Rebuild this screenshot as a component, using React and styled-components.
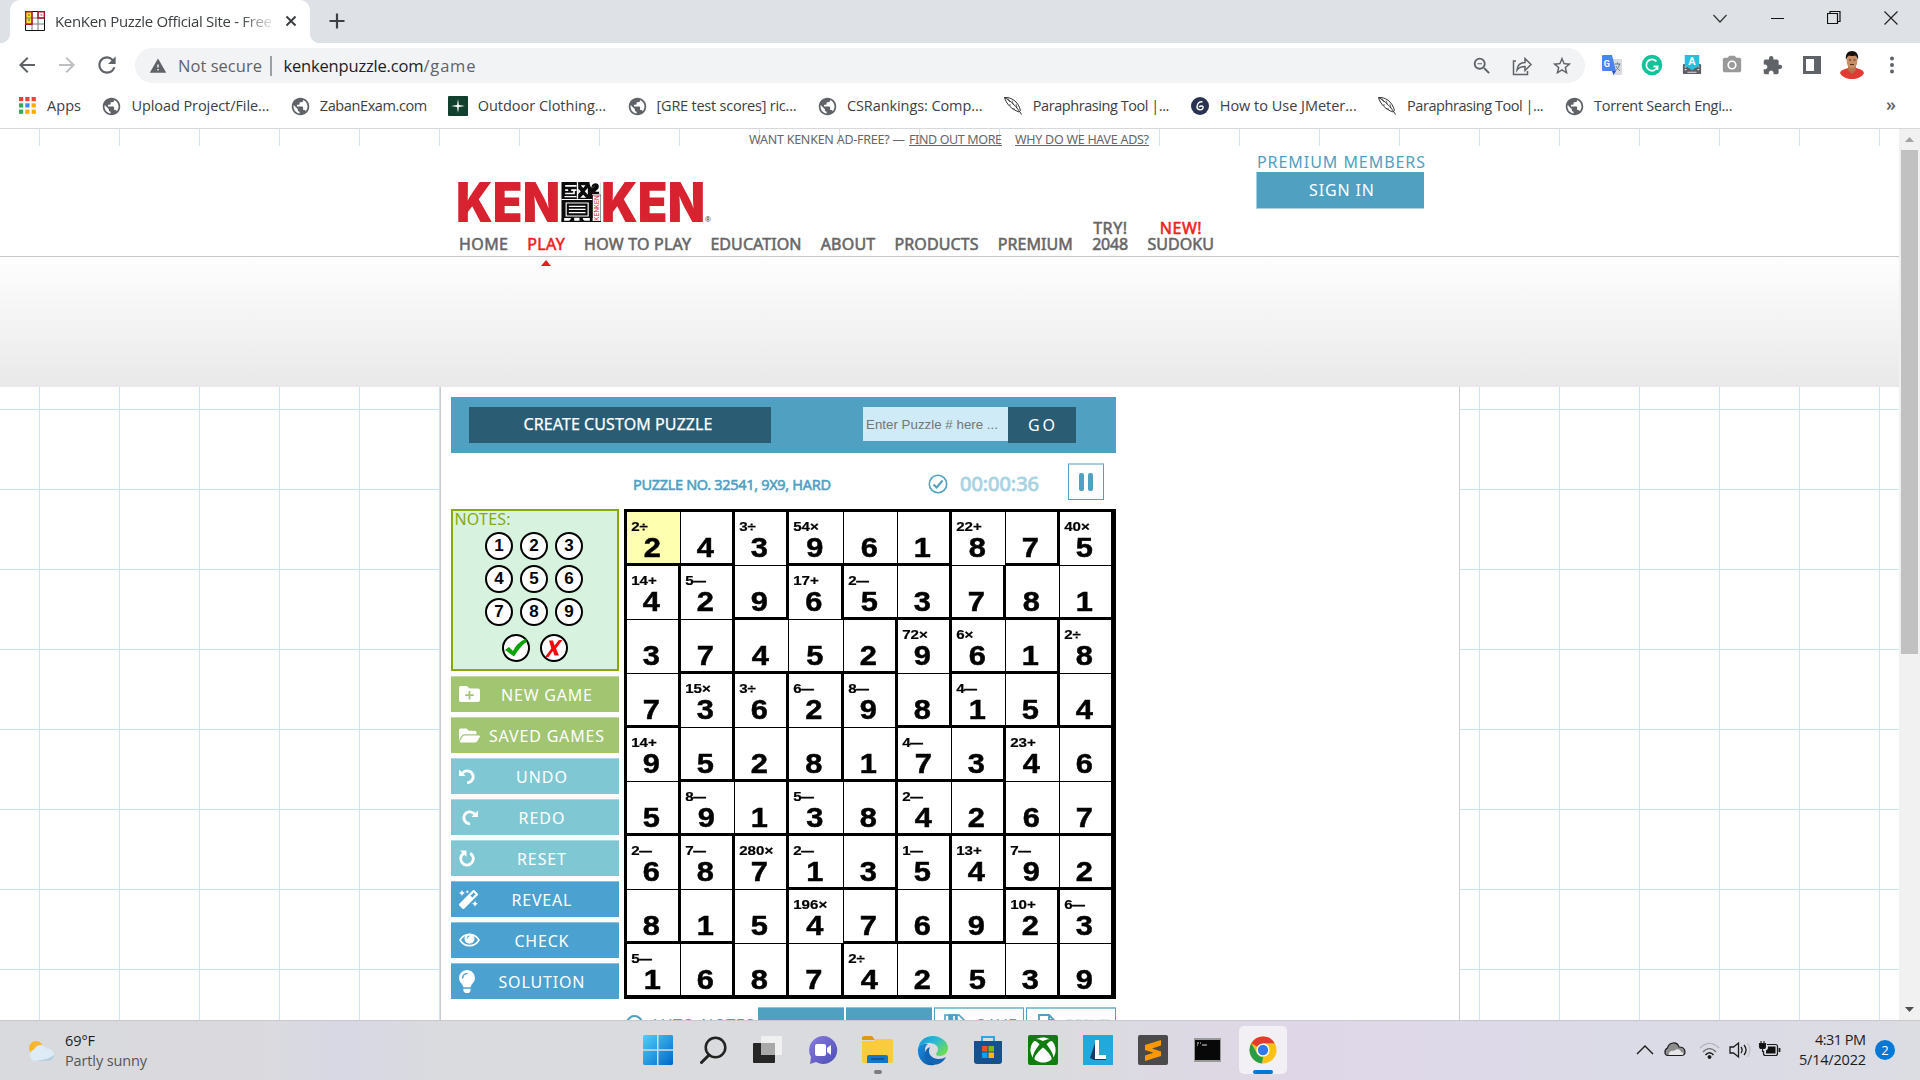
import React, { useLayoutEffect, useRef, useState } from "react";
import styled, { createGlobalStyle, css } from "styled-components";
import {
  MdPublic, MdZoomOut, MdStarBorder, MdWarning, MdRefresh, MdExtension, MdPhotoCamera, MdArrowBack, MdArrowForward,
} from "react-icons/md";
import { FaFolderOpen, FaMagic, FaLightbulb, FaXbox } from "react-icons/fa";

const Global = createGlobalStyle`
  * { box-sizing: border-box; }
  html, body { margin: 0; padding: 0; overflow: hidden; background: #fff; }
  svg { display: block; flex: none; }
`;

const UI = `"Open Sans", "Noto Sans", sans-serif`;
const SITE = `"Noto Sans", "Open Sans", sans-serif`;
const BLUE = "#4fa0c1";

/* Tracks a label out (or in) so that it fills the given width. */
const FitSpan = styled.span`
  display: inline-block;
  white-space: pre;
`;
function Fit({ w, children }) {
  const ref = useRef(null);
  const [ls, setLs] = useState(0);
  useLayoutEffect(() => {
    const natural = ref.current.getBoundingClientRect().width;
    setLs((w - natural) / (String(children).length - 1));
  }, []);
  return (
    <FitSpan ref={ref} style={{ letterSpacing: ls, marginRight: -ls }}>
      {children}
    </FitSpan>
  );
}

const Screen = styled.div`
  width: 1920px;
  height: 1080px;
  display: flex;
  flex-direction: column;
  overflow: hidden;
  font-family: ${UI};
`;

/* ---------- browser chrome ---------- */
const TabStrip = styled.div`
  height: 43px;
  flex: none;
  display: flex;
  background: #dee1e6;
  padding-left: 10px;
`;
const Tab = styled.div`
  position: relative;
  width: 300px;
  height: 43px;
  background: #fff;
  border-radius: 10px 10px 0 0;
  display: flex;
  align-items: center;
  padding: 0 13px 1px 15px;
  font-size: 15px;
  color: #3c4043;
  &::before, &::after {
    content: "";
    position: absolute;
    bottom: 0;
    width: 10px;
    height: 10px;
  }
  &::before { left: -10px; background: radial-gradient(circle at 0 0, transparent 10px, #fff 10.5px); }
  &::after { right: -10px; background: radial-gradient(circle at 100% 0, transparent 10px, #fff 10.5px); }
`;
const TabTitle = styled.div`
  width: 218px;
  margin: 0 12px 0 10px;
  overflow: hidden;
  white-space: nowrap;
  mask-image: linear-gradient(90deg, #000 185px, transparent 222px);
`;
const NewTab = styled.div`
  margin: 13px 0 0 19px;
`;
const WindowControls = styled.div`
  margin-left: auto;
  display: flex;
  height: 36px;
`;
const WindowButton = styled.div`
  width: 57.2px;
  display: grid;
  place-items: center;
`;
const Toolbar = styled.div`
  height: 44px;
  flex: none;
  display: flex;
  align-items: center;
  background: #fff;
  padding-left: 7px;
  color: #5f6368;
`;
const ToolCell = styled.div`
  width: 40px;
  height: 40px;
  flex: none;
  display: grid;
  place-items: center;
  color: ${(p) => p.$color || "#5f6368"};
`;
const Address = styled.div`
  width: 1450px;
  height: 35px;
  margin: 1px 7px 0 8px;
  border-radius: 18px;
  background: #f1f3f4;
  display: flex;
  align-items: center;
  padding: 0 3px 0 14px;
  font-size: 16.5px;
  color: #5f6368;
`;
const NotSecure = styled.div`
  margin-left: 11px;
`;
const Divider = styled.div`
  width: 1.5px;
  height: 20px;
  background: #9aa0a6;
  margin: 0 12px 0 8px;
`;
const Host = styled.span`color: #202124;`;
const AddressIcons = styled.div`
  margin-left: auto;
  display: flex;
`;
const Bookmarks = styled.div`
  height: 42px;
  flex: none;
  border-bottom: 1px solid #d6d8da;
  background: #fff;
  display: flex;
  align-items: center;
  gap: 20.4px;
  padding: 0 24px 4px 17px;
  font-size: 14.5px;
  color: #3c4043;
`;
const Bookmark = styled.div`
  display: flex;
  align-items: center;
  gap: 10px;
  white-space: nowrap;
`;
const BookmarkIcon = styled.div`
  width: 20px;
  height: 20px;
  display: grid;
  place-items: center;
  color: #5f6368;
`;
const MoreMarks = styled.div`
  margin-left: auto;
  font-size: 18px;
  font-weight: 600;
  line-height: 18px;
  padding-bottom: 3px;
  color: #5f6368;
`;

/* ---------- web page ---------- */
const View = styled.div`
  flex: 1;
  min-height: 0;
  display: flex;
  overflow: hidden;
`;
const Page = styled.div`
  width: 1899px;
  display: flex;
  flex-direction: column;
  font-family: ${SITE};
  background:
    linear-gradient(90deg, #c9e7f0 1px, transparent 1px) 39px 0 / 80px 80px,
    linear-gradient(180deg, #c9e7f0 1px, transparent 1px) 0 40px / 80px 80px,
    #fff;
`;
const AdFree = styled.div`
  height: 17px;
  flex: none;
  display: flex;
  padding-left: 749px;
  font-size: 12.5px;
  line-height: 21px;
  color: #666;
`;
const AdLink = styled.span`
  margin-left: ${(p) => p.$gap}px;
  height: 17px;
  line-height: 21px;
  border-bottom: 1px solid #666;
`;
const Header = styled.header`
  height: 111px;
  flex: none;
  background: #fff;
  border-bottom: 1px solid #c6c6c6;
  display: flex;
  padding-left: 459px;
`;
const HeaderMain = styled.div`
  width: 797px;
  height: 106px;
  display: flex;
  flex-direction: column;
  justify-content: space-between;
  padding-top: 34px;
  & > svg { overflow: visible; }
`;
const Nav = styled.nav`
  display: flex;
  align-items: flex-end;
  gap: 19.3px;
  height: 32px;
  flex: none;
  font-size: 16px;
  line-height: 16px;
  color: #666;
  -webkit-text-stroke: 0.55px currentColor;
`;
const NavItem = styled.div`
  position: relative;
  display: flex;
  flex-direction: column;
  align-items: center;
  color: ${(p) => (p.$active ? "#f02020" : "inherit")};
  ${(p) => p.$active && css`
    &::after {
      content: "";
      position: absolute;
      top: 24px;
      left: 50%;
      margin-left: -5.5px;
      border: solid transparent;
      border-width: 0 5.5px 6px;
      border-bottom-color: #e02020;
    }
  `}
`;
const Hot = styled.span`color: #f02020;`;
const Members = styled.div`
  width: 170px;
  padding: 6px 0 0 0;
  color: ${BLUE};
  font-size: 16px;
  line-height: 20px;
`;
const MembersTitle = styled.div`padding-left: 1px;`;
const SignIn = styled.div`
  width: 168px;
  height: 37px;
  background: ${BLUE};
  border-left: 1px solid #a7cfe0;
  border-bottom: 1px solid #a7cfe0;
  color: #fff;
  display: grid;
  place-items: center;
  padding-left: 2px;
`;
const Band = styled.div`
  height: 130px;
  flex: none;
  background: linear-gradient(#fefefe, #e9e9e9);
`;
const Panel = styled.main`
  width: 1020px;
  flex: 1;
  margin-left: 440px;
  background: #fff;
  border: solid #ccc;
  border-width: 0 1px;
  padding: 10px 0 0 10px;
`;
const Game = styled.div`width: 665px;`;
const CustomBar = styled.div`
  height: 56px;
  background: ${BLUE};
  padding: 10px 0 0 18px;
  display: flex;
  align-items: flex-start;
  color: #fff;
  font-size: 16px;
`;
const DarkButton = styled.div`
  width: ${(p) => p.$w}px;
  height: 36px;
  background: #2a5d73;
  display: grid;
  place-items: center;
  padding: 0 ${(p) => (p.$heavy ? 4 : 1)}px ${(p) => (p.$heavy ? 3 : 1)}px 0;
  -webkit-text-stroke: ${(p) => (p.$heavy ? "0.25px #fff" : "0")};
`;
const NumberField = styled.div`
  width: 145px;
  height: 34px;
  margin-left: 92px;
  background: #ceebf7;
  color: #757575;
  font: 13.3px/36px "Liberation Sans", Arial, sans-serif;
  padding-left: 3px;
`;
const Status = styled.div`
  height: 56px;
  display: flex;
  align-items: center;
  padding: 0 11px 0 182px;
  color: ${BLUE};
`;
const PuzzleName = styled.div`
  width: 295px;
  font-size: 14.5px;
  -webkit-text-stroke: 0.55px ${BLUE};
  padding-top: 6px;
`;
const Clock = styled.div`
  margin-left: 12px;
  width: 108px;
  font-size: 20px;
  color: #a9d3e3;
  -webkit-text-stroke: 0.9px #a9d3e3;
  padding-top: 4px;
`;
const CheckMark = styled.div`padding-top: 6px;`;
const Pause = styled.div`
  width: 36px;
  height: 37px;
  border: 1px solid #4fa0c1;
  border-top: 2px solid #a5cfdf;
  display: flex;
  justify-content: center;
  gap: 4px;
  padding-top: 8px;
`;
const PauseBar = styled.div`
  width: 5px;
  height: 18px;
  border-radius: 2px;
  background: ${BLUE};
`;
const Board = styled.div`
  display: flex;
  gap: 5px;
`;
const Side = styled.div`
  width: 168px;
  display: flex;
  flex-direction: column;
  gap: 5px;
`;
const Notes = styled.div`
  height: 162px;
  border: 2px solid #8aa90c;
  background: #d7f3df;
  display: flex;
  flex-direction: column;
`;
const NotesTitle = styled.div`
  color: #8aa90c;
  font-size: 16px;
  line-height: 16px;
  padding-left: 1.5px;
  height: 21px;
`;
const NoteGrid = styled.div`
  display: grid;
  grid-template-columns: repeat(3, 28px);
  gap: 5px 7px;
  padding-left: 32px;
`;
const NoteKey = styled.div`
  width: 28px;
  height: 28px;
  border: 2px solid #000;
  border-radius: 50%;
  background: #fff;
  display: grid;
  place-items: center;
  font: bold 17px/24px "Liberation Sans", Arial, sans-serif;
`;
const NoteActions = styled.div`
  display: flex;
  gap: 10px;
  padding: 8px 0 0 49px;
`;
const tones = { green: "#a1c571", teal: "#7fc7d3", blue: "#4ba1cf" };
const SideButton = styled.div`
  height: 36px;
  background: ${(p) => tones[p.$tone]};
  box-shadow: inset 0 1px rgba(255, 255, 255, 0.35);
  display: flex;
  align-items: center;
  color: #fff;
  font-size: 16px;
  padding-left: 8px;
`;
const SideIcon = styled.div`
  width: 24px;
  display: flex;
  align-items: center;
`;
const SideLabel = styled.div`
  flex: 1;
  white-space: nowrap;
  text-align: center;
  padding: 1px ${(p) => p.$inset}px 0 0;
`;
const Bulb = styled(FaLightbulb)`
  width: 16px;
  height: 23px;
`;
const Grid = styled.div`
  width: 492px;
  height: 490px;
  border: solid #000;
  border-width: 3px 2px 1px 3px;
  display: grid;
  grid-template-columns: 54px 54px 54px 55px repeat(5, 54px);
  grid-template-rows: repeat(9, 54px);
`;
const Cell = styled.div`
  border: solid #000;
  border-width: 0 ${(p) => (p.$right ? 3 : 1)}px ${(p) => (p.$bottom ? 3 : 1)}px 0;
  background: ${(p) => (p.$selected ? "#ffffb0" : "#fff")};
  display: flex;
  flex-direction: column;
  font-family: "Liberation Sans", Arial, sans-serif;
  font-weight: bold;
  color: #000;
`;
const Clue = styled.div`
  height: 22px;
  padding: 9px 0 0 3.5px;
  font-size: 12.6px;
  line-height: 13px;
  transform: scaleX(1.2);
  transform-origin: 0 0;
  white-space: nowrap;
  -webkit-text-stroke: 0.2px #000;
`;
const Dash = styled.span`
  font-size: 10.2px;
  -webkit-text-stroke: 0.6px #000;
`;
const Digit = styled.div`
  font-size: 28px;
  line-height: 27px;
  text-align: center;
  padding-right: 2px;
  transform: scaleX(1.1);
  -webkit-text-stroke: 0.5px #000;
`;
const Options = styled.div`
  display: flex;
  gap: 2px;
  padding: 8px 0 0 173px;
  color: ${BLUE};
  font-size: 16px;
`;
const AutoNotes = styled.div`
  width: 132px;
  display: flex;
  align-items: flex-start;
  gap: 7px;
  padding: 8px 0 0 2px;
  line-height: 20px;
`;
const Ring = styled.div`
  width: 17px;
  height: 17px;
  flex: none;
  border: 2px solid ${BLUE};
  border-radius: 50%;
`;
const Solid = styled.div`
  width: 86px;
  height: 36px;
  background: ${BLUE};
  border-top: 1px solid #8fc4d8;
`;
const Outline = styled.div`
  width: 90px;
  height: 36px;
  border: 1px solid ${BLUE};
  border-top: 2px solid #8fc4d8;
  display: flex;
  gap: 9px;
  padding: 5px 0 0 9px;
  line-height: 22px;
  color: ${(p) => (p.$faint ? "#d7eaf1" : BLUE)};
`;
const ScrollTrack = styled.div`
  width: 21px;
  background: #f1f1f1;
  display: flex;
  flex-direction: column;
  align-items: center;
  padding: 8px 0;
`;
const ScrollThumb = styled.div`
  width: 17px;
  height: 504px;
  margin: 8px 0 auto;
  background: #c1c1c1;
`;

/* ---------- taskbar ---------- */
const Taskbar = styled.div`
  height: 60px;
  flex: none;
  border-top: 1px solid #c9c9cd;
  display: flex;
  align-items: center;
  background: linear-gradient(90deg, #d9dadd 0, #dadade 260px, #d8d8e5 340px, #dadbde 450px, #dadbdf 1050px, #dfd7e7 1290px, #ddd9e8 1500px, #dbdbe7 1650px, #dcdce3 1920px);
  color: #1b1b1b;
  font-size: 14.5px;
  line-height: 20px;
`;
const Weather = styled.div`
  width: 633.5px;
  flex: none;
  display: flex;
  align-items: center;
  gap: 10px;
  padding-left: 28px;
`;
const Muted = styled.div`color: #555;`;
const Pins = styled.div`
  display: flex;
  gap: 7px;
  padding-bottom: 1px;
`;
const Pin = styled.div`
  position: relative;
  width: 48px;
  height: 48px;
  border-radius: 5px;
  display: grid;
  place-items: center;
  background: ${(p) => (p.$active ? "rgba(255,255,255,0.6)" : "transparent")};
  &::after {
    content: "";
    display: ${(p) => (p.$active || p.$running ? "block" : "none")};
    position: absolute;
    bottom: 0;
    left: 50%;
    width: ${(p) => (p.$active ? 20 : 8)}px;
    height: 4px;
    margin-left: ${(p) => (p.$active ? -10 : -4)}px;
    border-radius: 2px;
    background: ${(p) => (p.$active ? "#0078d7" : "#7d7d80")};
  }
`;
const Tray = styled.div`
  margin-left: auto;
  display: flex;
  align-items: center;
  padding: 0 25px 1px 0;
`;
const DateTime = styled.div`
  width: 84px;
  text-align: right;
`;
const Badge = styled.div`
  width: 20px;
  height: 20px;
  margin-left: 9px;
  border-radius: 50%;
  background: #0078d7;
  color: #fff;
  font-size: 13px;
  text-align: center;
`;

/* ---------- drawings ---------- */
const Favicon = () => (
  <svg width="20" height="20" viewBox="0 0 20 20">
    <path fill="#fff" d="M0 0h20v20H0z" />
    <path fill="#f4e925" d="M1 1h6v12H1z" />
    <path stroke="#777" fill="none" d="M7 0v20M13 0v20M0 7h20M0 13h20" />
    <path stroke="#111" fill="none" d="M.5.5h19v19H.5z" />
    <path stroke="#b1122a" fill="none" strokeWidth="1.4" d="M.7.7h6.3v12.6H.7zM13 .7h6.3V7H13z" />
    <path stroke="#555" d="M3 4h2M3 9h2M15.5 4h2" />
  </svg>
);
const AppsIcon = () => (
  <svg width="17" height="17" viewBox="0 0 17 17">
    {["#ea4335", "#ea4335", "#ea4335", "#34a853", "#4285f4", "#fbab00", "#34a853", "#fbab00", "#fbab00"].map((c, i) => (
      <rect key={i} x={(i % 3) * 6.3} y={Math.floor(i / 3) * 6.3} width="4.2" height="4.2" fill={c} />
    ))}
  </svg>
);
const StarMark = () => (
  <svg width="20" height="20" viewBox="0 0 20 20">
    <rect width="20" height="20" rx="1" fill="#12402f" />
    <path d="M10 3l.9 6.1L17 10l-6.1.9L10 17l-.9-6.1L3 10l6.1-.9z" fill="#fff" />
  </svg>
);
const Feather = () => (
  <svg width="20" height="20" viewBox="0 0 20 20" fill="none" stroke="#333" strokeWidth="1">
    <path d="M1.500 1.500C8 1 15 5 17.500 14.500L16 16C8 13 3.500 8 1.500 1.500zM1.500 1.500C8 5 14 11 18.500 18.500" />
    <path d="M5 2.500l2 3.500M9 4.500l1.500 4.500M13 8l1 4M8 9l-2 0M12 13l-2.500 0" strokeWidth=".7" />
  </svg>
);
const GMark = () => (
  <svg width="20" height="20" viewBox="0 0 20 20">
    <circle cx="10" cy="10" r="9" fill="#2b3252" />
    <path d="M12.500 6C10 5 7 7.500 7 11c0 3 5 4 6 1 .6-2-2-3-4-1" fill="none" stroke="#fff" strokeWidth="1.500" />
  </svg>
);
const Share = () => (
  <svg width="22" height="22" viewBox="0 0 22 22" fill="none" stroke="#5f6368" strokeWidth="1.500">
    <path d="M5 6H2.500v13.500h14V16M6 15c.5-5 3-7.500 8-7.500V3.500l6 6-6 6v-4c-4 0-6 .8-8 3.500z" />
  </svg>
);
const Translate = () => (
  <svg width="22" height="22" viewBox="0 0 22 22">
    <path d="M9 5h11a1 1 0 0 1 1 1v14a1 1 0 0 1-1 1h-7z" fill="#dadce0" />
    <path d="M1 2a1 1 0 0 1 1-1h9l4 16H2a1 1 0 0 1-1-1z" fill="#4a84ee" />
    <path d="M11 17h4l-2.500 4z" fill="#2a4fc5" />
    <text x="2.800" y="12.500" fontFamily="Roboto" fontSize="9" fontWeight="bold" fill="#fff">G</text>
    <path d="M13.500 10h6M16.500 8.500V10M18.500 10c-.5 3-2 5-4 6.500M15 12c1 2 2 3.500 4 4.500" stroke="#607d8b" fill="none" />
  </svg>
);
const Grammarly = () => (
  <svg width="22" height="22" viewBox="0 0 22 22">
    <circle cx="11" cy="11" r="10.300" fill="#15c39a" />
    <path d="M15.500 7.500a5.700 5.700 0 1 0 1 5h-4M16.500 12.500V16" fill="none" stroke="#fff" strokeWidth="1.800" />
  </svg>
);
const KeyboardA = () => (
  <svg width="20" height="20" viewBox="0 0 22 22">
    <rect x="1" y="10" width="20" height="11" rx="1" fill="#5c5f63" />
    <path d="M3 13h2m2 0h2m5 0h2m2 0h1M3 16h2m12 0h2M6 19h10" stroke="#dfe1e3" strokeWidth="1.300" />
    <path d="M3 0h16v12l-4.500 2-3.500 3-3.500-3L3 12z" fill="#27bfdd" />
    <text x="7" y="11" fontFamily="Roboto" fontSize="12" fontWeight="bold" fill="#fff">A</text>
  </svg>
);
const SidePanelIcon = () => (
  <svg width="18" height="18" viewBox="0 0 18 18">
    <path fill="#5f6368" fillRule="evenodd" d="M0 0h18v18H0zM3 3v12h8V3z" />
  </svg>
);
const Avatar = () => (
  <svg width="26" height="28" viewBox="0 0 26 28">
    <path d="M1 22c1-3 5-4 8-5h8c4 1 7 2 8 5-2 4-7 6-12 6S3 26 1 22z" fill="#e23a33" />
    <path d="M9 14h8v5l-4 4-4-4z" fill="#b5744c" />
    <ellipse cx="13" cy="10" rx="5.400" ry="7.500" fill="#c98d66" />
    <path d="M7 9C6 3 9 0 13 0s7 3 6 9c-1-3-2-4-3-4.500-2 .8-5 .5-6 0C8.500 6 7.500 7 7 9z" fill="#17110f" />
    <path d="M10 9h2m2.500 0h2M11 13.500h4" stroke="#51301f" />
  </svg>
);
const Logo = () => (
  <svg width="256" height="40" viewBox="0 6 256 40">
    <g fontFamily="Inter" fontWeight="900" fontSize="55" fill="#d8222f">
      <text x="-3" y="48" textLength="104" lengthAdjust="spacingAndGlyphs">KEN</text>
      <text x="142" y="48" textLength="104" lengthAdjust="spacingAndGlyphs">KEN</text>
    </g>
    <g transform="translate(102.500 8) scale(.3333)">
      <path d="M0 0h118v120H0z" fill="#0b0b0b" />
      <g fill="#fff">
        <path d="M11 9h34v5H11zM11 22h9v5h-9zM29 22h16v5H29zM11 32h24v5H11zM9 42h36v4H9zM35 22h5v15h-5z" />
        <path d="M46 0h4v50h-4zM0 51h92v3H0z" />
        <path d="M58 10h14l-7 8zM50 20l8 8-8 9zM79 18v20l-9-10zM65 38l9 9H56z" />
        <path d="M84 0h34v38H92V30c5-6 12-9 13-15 0-6-8-5-8 1h-9C86 10 84 6 84 0z" />
      </g>
      <path d="M90 15C91 0 113 0 112 14c0 7-7 10-11 15h12v7H89v-5c4-8 13-11 13-17 0-4-4-4-5 1z" fill="#0b0b0b" />
      <path d="M14 63h66v39H14zM22 73h50M22 82h50M22 92h50" fill="none" stroke="#fff" strokeWidth="3.500" />
      <path d="M0 108h28c0 5-3 8-8 10H0zM93 108H64c0 5 3 8 8 10h21zM38 107h16v11H38z" fill="#fff" />
      <path d="M0 108h8v12H0zM85 104h8v16h-8zM0 116h118v4H0z" fill="#0b0b0b" />
      <path d="M94 40h23v77H94z" fill="#fff" />
      <text transform="translate(113 116) rotate(-90)" fontFamily="Liberation Sans" fontSize="22" textLength="75" lengthAdjust="spacingAndGlyphs" fill="#d8222f">KENKEN</text>
    </g>
    <text x="246" y="48" fontFamily="Liberation Sans" fontSize="8" fill="#222">®</text>
  </svg>
);
const FolderPlus = () => (
  <svg width="21" height="16" viewBox="0 0 21 16">
    <path fill="#fff" d="M2 0h6l2.500 2.500H19a2 2 0 0 1 2 2V14a2 2 0 0 1-2 2H2a2 2 0 0 1-2-2V2a2 2 0 0 1 2-2z" />
    <path d="M10.500 5v8.500M6.200 9.200h8.600" stroke="#a1c571" strokeWidth="1.800" />
  </svg>
);
const Undo = () => (
  <svg width="16" height="17" viewBox="0 0 16 17">
    <path d="M3.500 5A6 6 0 1 1 8 14.800" fill="none" stroke="#fff" strokeWidth="2.800" />
    <path d="M0 1.500V8h6.500z" fill="#fff" />
  </svg>
);
const Redo = () => (
  <svg width="19" height="17" viewBox="-3 0 19 17">
    <path d="M12.500 5A6 6 0 1 0 8 14.800" fill="none" stroke="#fff" strokeWidth="2.800" />
    <path d="M16 1.500V8H9.500z" fill="#fff" />
  </svg>
);
const Reset = () => (
  <svg width="16" height="17" viewBox="0 0 16 17">
    <path d="M4.500 3.500A6.300 6.300 0 1 0 11.200 3.300" fill="none" stroke="#fff" strokeWidth="2.800" />
    <path d="M1 .500h6.500V7z" fill="#fff" />
  </svg>
);
const Eye = () => (
  <svg width="21" height="14" viewBox="0 0 21 14">
    <path d="M1 7c4.500-7.500 14.500-7.500 19 0-4.500 7.500-14.500 7.500-19 0z" fill="none" stroke="#fff" strokeWidth="1.600" />
    <circle cx="10.500" cy="5.800" r="5" fill="#fff" />
    <path d="M8 5.500A2.600 2.600 0 0 1 10.500 3" fill="none" stroke="#4ba1cf" strokeWidth="1" />
  </svg>
);
const CheckCircle = () => (
  <svg width="20" height="20" viewBox="0 0 20 20" fill="none" stroke={BLUE}>
    <circle cx="10" cy="10" r="8.700" strokeWidth="1.600" />
    <path d="M5.500 10.500l3.200 3 5.800-7" strokeWidth="2" />
  </svg>
);
const GreenCheck = () => (
  <svg width="24" height="20" viewBox="0 0 24 20">
    <path d="M1 12l4-3 4 4C12 7 17 2 22.500 1v3C18 7 14 12 10 18.500z" fill="#0aa30a" />
  </svg>
);
const RedX = () => (
  <svg width="18" height="19" viewBox="0 0 18 19">
    <path d="M4 1.500h4l1.500 5L14 1h3.500l-6.500 8.500 3 7h-4.500l-1.600-4.500L3.500 18H0l6.300-8.500z" fill="#f80808" />
  </svg>
);
const FloppyIcon = () => (
  <svg width="23" height="22" viewBox="0 0 23 22" fill="none" stroke={BLUE} strokeWidth="1.600">
    <path d="M1 1h14l6 6v14H1z" /><path d="M5 1h8v8H5z" fill={BLUE} /><path d="M10 2v6" stroke="#fff" />
  </svg>
);
const PaperIcon = () => (
  <svg width="20" height="22" viewBox="-2 0 20 22" fill="none" stroke={BLUE} strokeWidth="1.800">
    <path d="M1 21V1h10l5 5v15M11 1v5h5" />
  </svg>
);
const WeatherIcon = () => (
  <svg width="27" height="24" viewBox="0 0 27 24">
    <circle cx="8" cy="9" r="7" fill="#f8b52d" />
    <path d="M7 22a6 6 0 0 1-1-11.500C8 5 16 4 18.500 10c5-1 8 3 7.500 7s-3 5-6 5z" fill="#dcebf5" />
    <path d="M8 22h12c4 0 6-3 6-6-4 4-13 5-18 6z" fill="#b5cddd" />
  </svg>
);
const WindowsIcon = () => (
  <svg width="30" height="30" viewBox="0 0 30 30">
    <defs><linearGradient id="win" x2="1" y2="1"><stop stopColor="#4fd0fb" /><stop offset="1" stopColor="#0067c8" /></linearGradient></defs>
    <path fill="url(#win)" d="M1 0h13v14.300H0V1zM15.500 0H29l1 1v13.300H15.500zM0 15.700h14V30H1l-1-1zM15.500 15.700H30V29l-1 1H15.500z" />
  </svg>
);
const SearchIcon = () => (
  <svg width="28" height="28" viewBox="-.5 0 28 28" fill="none" stroke="#222">
    <circle cx="16" cy="11.500" r="9.800" strokeWidth="2.500" /><path d="M9.500 19L2 26.500" strokeWidth="3" strokeLinecap="round" />
  </svg>
);
const TaskViewIcon = () => (
  <svg width="30" height="30" viewBox="0 0 30 30">
    <rect x="0" y="8" width="22" height="20" rx="1" fill="#262626" />
    <rect x="8" y="1" width="21" height="19" rx="1" fill="#f3f3f3" fillOpacity=".85" />
    <rect x="8" y="8" width="14" height="12" fill="#a9a9a9" />
  </svg>
);
const ChatIcon = () => (
  <svg width="30" height="30" viewBox="0 0 30 30">
    <defs><linearGradient id="chat" x2="1" y2="1"><stop stopColor="#8b7ae0" /><stop offset="1" stopColor="#4a4fb5" /></linearGradient></defs>
    <path d="M15 1a14 14 0 1 1-7 26l-6 2 1-7A14 14 0 0 1 15 1z" fill="url(#chat)" />
    <rect x="7" y="9" width="11" height="12" rx="2" fill="#fff" /><path d="M19 13l4-3v10l-4-3z" fill="#fff" />
  </svg>
);
const ExplorerIcon = () => (
  <svg width="31" height="28" viewBox="0 0 31 28">
    <path d="M0 2a2 2 0 0 1 2-2h8l3 4H0z" fill="#dc9a10" />
    <path d="M0 5h12l2-2h15a2 2 0 0 1 2 2v20a2 2 0 0 1-2 2H2a2 2 0 0 1-2-2z" fill="#fbcb3e" />
    <path d="M5 27v-6a2 2 0 0 1 2-2h17a2 2 0 0 1 2 2v6z" fill="#1278cd" /><path d="M9 23h13" stroke="#0b4c8c" strokeWidth="1.500" />
  </svg>
);
const EdgeIcon = () => (
  <svg width="31" height="31" viewBox="0 0 31 31">
    <defs>
      <linearGradient id="edgeA" x2="1" y2=".7"><stop stopColor="#1591d8" /><stop offset=".5" stopColor="#2bbbd6" /><stop offset="1" stopColor="#6ddd4e" /></linearGradient>
      <linearGradient id="edgeB" x2="1" y2="1"><stop stopColor="#1b8fe0" /><stop offset="1" stopColor="#0c4f9f" /></linearGradient>
    </defs>
    <path d="M1 14C2 6 8 1 16 1c8 0 15 6 15 12 0 5-4 8-8 8-3 0-4-1-4-2s2-2 2-5c0-4-5-6-9-6-6 0-9 3-11 6z" fill="url(#edgeA)" />
    <path d="M1 14c1-3 5-6 10-5-3 2-4 6-2 11 2 4 7 7 12 7l-4 3C8 32 0 24 1 14z" fill="url(#edgeB)" />
    <path d="M13 12c-3 6 1 12 9 12 3 0 5-1 7-2-3 6-9 9-14 7-8-3-10-14-2-17z" fill="#1264b4" />
  </svg>
);
const StoreIcon = () => (
  <svg width="30" height="30" viewBox="0 0 30 30">
    <path d="M9 7V2h12v5" fill="none" stroke="#2ba7e8" strokeWidth="2" />
    <path d="M1 6h28v20a3 3 0 0 1-3 3H4a3 3 0 0 1-3-3z" fill="#15508f" />
    <path fill="#f25022" d="M9 11h5.500v5.500H9z" /><path fill="#7fba00" d="M15.500 11H21v5.500h-5.500z" />
    <path fill="#00a4ef" d="M9 17.500h5.500V23H9z" /><path fill="#ffb900" d="M15.500 17.500H21V23h-5.500z" />
  </svg>
);
const XboxTile = styled.div`
  width: 30px;
  height: 30px;
  border-radius: 2px;
  background: #107c10;
  color: #fff;
  display: grid;
  place-items: center;
`;
const LIcon = () => (
  <svg width="30" height="30" viewBox="0 0 30 30">
    <path fill="#22a9dc" d="M0 0h30v30H0z" /><path d="M13 5l-6 18 4 2h12v-2l-10-2z" fill="#173a66" />
    <path d="M12 5h4v15h7v4H12z" fill="#fff" />
  </svg>
);
const SublimeIcon = () => (
  <svg width="30" height="30" viewBox="0 0 30 30">
    <rect width="30" height="30" rx="2" fill="#4a4a4a" />
    <path d="M23 5v5.500l-9 3 9 3V21L7 26v-5.500l8.500-2.700L7 15V10z" fill="#ff9800" />
  </svg>
);
const TerminalIcon = () => (
  <svg width="27" height="24" viewBox="0 0 27 24">
    <path fill="#999" d="M0 0h27v24H0z" /><path fill="#080808" d="M1 2h25v20H1z" />
    <path d="M3 5h2m1 0h1m1 2h5M3 7h1" stroke="#ddd" />
  </svg>
);
const ChromeIcon = () => (
  <svg width="28" height="28" viewBox="0 0 28 28">
    <circle cx="14" cy="14" r="13.500" fill="#fbc116" />
    <path d="M14 14L2.300 7.300A13.500 13.500 0 0 1 25.700 7.300H14z" fill="#e33b2e" />
    <path d="M2.300 7.300L8.500 18a6.400 6.400 0 0 0 5.500 3L13 27.500A13.500 13.500 0 0 1 2.300 7.300z" fill="#269e4a" />
    <circle cx="14" cy="14" r="6.600" fill="#fff" /><circle cx="14" cy="14" r="5.200" fill="#3479ea" />
  </svg>
);
const TrayIcons = () => (
  <svg width="146" height="24" viewBox="0 0 146 24" fill="none" stroke="#1b1b1b">
    <path d="M1 16l8-8 8 8" strokeWidth="1.400" />
    <g transform="translate(1 -1)">
      <path d="M31 18.500c-4 0-4-6-.500-7.500C32 5 40 4 42 10c4 0 6 2 6 5 0 2-1 3.500-4 3.500z" fill="#8e8e8e" strokeWidth="1.200" />
      <path d="M32 18c-1-3 3-5 5-4 2-3 7-2 7 1 3 0 3 3 1 3z" fill="#e6e6e9" stroke="none" />
    </g>
    <path d="M64 10c6-6 13-6 19 0" stroke="#b5b5bb" strokeWidth="1.400" /><path d="M67 14c4-4.500 9-4.500 13 0" stroke="#777" strokeWidth="1.400" />
    <path d="M69.500 17c2.500-3 5.500-3 8 0" strokeWidth="1.500" /><circle cx="73.500" cy="19" r="1.500" fill="#111" />
    <path d="M94 9h3.500l5-4v14l-5-4H94z" strokeWidth="1.300" /><path d="M105 9c1.500 2 1.500 4 0 6M108 7c2.500 3 2.500 7 0 10" strokeWidth="1.300" />
    <path d="M111 5c4 4 4 10 0 14" stroke="#b5b5bb" />
    <path d="M131 6.500h8.500a2 2 0 0 1 2 2v7a2 2 0 0 1-2 2h-10a2 2 0 0 1-2-2V13" strokeWidth="1.200" />
    <path d="M130 15.500v-3c2-1 2-2.500 2-4h7.500v7z" fill="#111" stroke="none" /><path d="M143.500 10v4" strokeWidth="1.800" />
    <path d="M123.500 5.500h6v3a2 2 0 0 1-2 2h-2a2 2 0 0 1-2-2zM125 3v2.500M128 3v2.500M126.500 10v4" fill="#111" strokeWidth="1.100" />
  </svg>
);

const bookmarks = [
  [<AppsIcon />, "Apps", 34], [<MdPublic size={21} />, "Upload Project/File...", 138], [<MdPublic size={21} />, "ZabanExam.com", 107.500],
  [<StarMark />, "Outdoor Clothing...", 128.500], [<MdPublic size={21} />, "[GRE test scores] ric...", 140],
  [<MdPublic size={21} />, "CSRankings: Comp...", 135.500], [<Feather />, "Paraphrasing Tool |...", 136.500], [<GMark />, "How to Use JMeter...", 137],
  [<Feather />, "Paraphrasing Tool |...", 136.500], [<MdPublic size={21} />, "Torrent Search Engi...", 138.500],
];

const cages = ["aabcccdde", "fgbhiidee", "fghhhjkkl", "fmnopjqql", "rmnopsstt", "ruuvvwwtt", "xyzAABCDD", "xyzEEBCFG", "HHzEIIFFG"];
const digits = ["243961875", "429653781", "374529618", "736298154", "952817346", "591384267", "687135492", "815476923", "168742539"];
const clues = {
  a: "2÷", b: "3÷", c: "54×", d: "22+", e: "40×", f: "14+", g: "5—", h: "17+", i: "2—", j: "72×", k: "6×", l: "2÷",
  m: "15×", n: "3÷", o: "6—", p: "8—", q: "4—", r: "14+", s: "4—", t: "23+", u: "8—", v: "5—", w: "2—", x: "2—",
  y: "7—", z: "280×", A: "2—", B: "1—", C: "13+", D: "7—", E: "196×", F: "10+", G: "6—", H: "5—", I: "2÷",
};
const clueCells = {};
cages.forEach((row, r) => [...row].forEach((k, c) => { if (!(k in clueCells)) clueCells[k] = r * 9 + c; }));

const clueText = (s) => (s.endsWith("—") ? <>{s.slice(0, -1)}<Dash>—</Dash></> : s);

const sideButtons = [
  ["green", <FolderPlus />, "NEW GAME", 91, 9], ["green", <FaFolderOpen size={21} />, "SAVED GAMES", 115, 9],
  ["teal", <Undo />, "UNDO", 51, 19], ["teal", <Redo />, "REDO", 46, 19], ["teal", <Reset />, "RESET", 49, 19],
  ["blue", <FaMagic size={19} />, "REVEAL", 60, 19], ["blue", <Eye />, "CHECK", 54, 19], ["blue", <Bulb />, "SOLUTION", 86, 19],
];

export default function App() {
  return (
    <Screen>
      <Global />
      <TabStrip>
        <Tab>
          <Favicon />
          <TabTitle><Fit w={217}>KenKen Puzzle Official Site - Free</Fit></TabTitle>
          <svg width="12" height="12" viewBox="0 0 12 12"><path d="M1.500 1.500l9 9m0-9l-9 9" stroke="#3c4043" strokeWidth="2" /></svg>
        </Tab>
        <NewTab>
          <svg width="16" height="16" viewBox="0 0 16 16"><path d="M8 .500v15M.500 8h15" stroke="#3c4043" strokeWidth="2.200" /></svg>
        </NewTab>
        <WindowControls>
          <WindowButton><svg width="14" height="9" viewBox="0 0 14 9"><path d="M.500 1L7 8l6.500-7" fill="none" stroke="#333" strokeWidth="1.200" /></svg></WindowButton>
          <WindowButton><svg width="13" height="2" viewBox="0 0 13 2"><path d="M0 1.500h13" stroke="#111" /></svg></WindowButton>
          <WindowButton><svg width="14" height="14" viewBox="0 0 14 14"><path d="M.500 2.500h10v10H.500zM3 2.500V.500h10v10h-2.500" fill="none" stroke="#111" strokeWidth="1.200" /></svg></WindowButton>
          <WindowButton><svg width="14" height="14" viewBox="0 0 14 14"><path d="M.500.500l13 13m0-13l-13 13" stroke="#222" strokeWidth="1.200" /></svg></WindowButton>
        </WindowControls>
      </TabStrip>
      <Toolbar>
        <ToolCell><MdArrowBack size={24} /></ToolCell>
        <ToolCell $color="#bdbfc2"><MdArrowForward size={24} /></ToolCell>
        <ToolCell><MdRefresh size={26} /></ToolCell>
        <Address>
          <MdWarning size={18} />
          <NotSecure><Fit w={84}>Not secure</Fit></NotSecure>
          <Divider />
          <Host><Fit w={140}>kenkenpuzzle.com</Fit></Host>
          <Fit w={52}>/game</Fit>
          <AddressIcons>
            <ToolCell><MdZoomOut size={22} /></ToolCell>
            <ToolCell><Share /></ToolCell>
            <ToolCell><MdStarBorder size={22} /></ToolCell>
          </AddressIcons>
        </Address>
        <ToolCell><Translate /></ToolCell>
        <ToolCell><Grammarly /></ToolCell>
        <ToolCell><KeyboardA /></ToolCell>
        <ToolCell $color="#999"><MdPhotoCamera size={22} /></ToolCell>
        <ToolCell><MdExtension size={21} /></ToolCell>
        <ToolCell><SidePanelIcon /></ToolCell>
        <ToolCell><Avatar /></ToolCell>
        <ToolCell>
          <svg width="4" height="18" viewBox="0 0 4 18" fill="#5f6368"><circle cx="2" cy="2.500" r="2" /><circle cx="2" cy="9" r="2" /><circle cx="2" cy="15.500" r="2" /></svg>
        </ToolCell>
      </Toolbar>
      <Bookmarks>
        {bookmarks.map(([icon, label, w], i) => (
          <Bookmark key={i}><BookmarkIcon>{icon}</BookmarkIcon><Fit w={w}>{label}</Fit></Bookmark>
        ))}
        <MoreMarks>»</MoreMarks>
      </Bookmarks>

      <View>
        <Page>
          <AdFree>
            <Fit w={156}>WANT KENKEN AD-FREE? —</Fit>
            <AdLink $gap={4}><Fit w={93}>FIND OUT MORE</Fit></AdLink>
            <AdLink $gap={13}><Fit w={134}>WHY DO WE HAVE ADS?</Fit></AdLink>
          </AdFree>
          <Header>
            <HeaderMain>
              <Logo />
              <Nav>
                <NavItem><Fit w={49}>HOME</Fit></NavItem>
                <NavItem $active><Fit w={37.5}>PLAY</Fit></NavItem>
                <NavItem><Fit w={107}>HOW TO PLAY</Fit></NavItem>
                <NavItem><Fit w={91}>EDUCATION</Fit></NavItem>
                <NavItem><Fit w={54.500}>ABOUT</Fit></NavItem>
                <NavItem><Fit w={84}>PRODUCTS</Fit></NavItem>
                <NavItem><Fit w={75}>PREMIUM</Fit></NavItem>
                <NavItem><Fit w={34}>TRY!</Fit><Fit w={36}>2048</Fit></NavItem>
                <NavItem><Hot><Fit w={42}>NEW!</Fit></Hot><Fit w={66.500}>SUDOKU</Fit></NavItem>
              </Nav>
            </HeaderMain>
            <Members>
              <MembersTitle><Fit w={168}>PREMIUM MEMBERS</Fit></MembersTitle>
              <SignIn><Fit w={65}>SIGN IN</Fit></SignIn>
            </Members>
          </Header>
          <Band />
          <Panel>
            <Game>
              <CustomBar>
                <DarkButton $w={302} $heavy><Fit w={189}>CREATE CUSTOM PUZZLE</Fit></DarkButton>
                <NumberField><Fit w={132}>Enter Puzzle # here ...</Fit></NumberField>
                <DarkButton $w={68}><Fit w={27}>GO</Fit></DarkButton>
              </CustomBar>
              <Status>
                <PuzzleName><Fit w={198}>PUZZLE NO. 32541, 9X9, HARD</Fit></PuzzleName>
                <CheckMark><CheckCircle /></CheckMark>
                <Clock><Fit w={79}>00:00:36</Fit></Clock>
                <Pause><PauseBar /><PauseBar /></Pause>
              </Status>
              <Board>
                <Side>
                  <Notes>
                    <NotesTitle><Fit w={56}>NOTES:</Fit></NotesTitle>
                    <NoteGrid>{[1, 2, 3, 4, 5, 6, 7, 8, 9].map((n) => <NoteKey key={n}>{n}</NoteKey>)}</NoteGrid>
                    <NoteActions><NoteKey><GreenCheck /></NoteKey><NoteKey><RedX /></NoteKey></NoteActions>
                  </Notes>
                  {sideButtons.map(([tone, icon, label, w, inset]) => (
                    <SideButton key={label} $tone={tone}>
                      <SideIcon>{icon}</SideIcon>
                      <SideLabel $inset={inset}><Fit w={w}>{label}</Fit></SideLabel>
                    </SideButton>
                  ))}
                </Side>
                <Grid>
                  {cages.flatMap((row, r) => [...row].map((k, c) => (
                    <Cell
                      key={r * 9 + c}
                      $right={c === 8 || row[c + 1] !== k}
                      $bottom={r === 8 || cages[r + 1][c] !== k}
                      $selected={r === 0 && c === 0}
                    >
                      <Clue>{clueCells[k] === r * 9 + c ? clueText(clues[k]) : ""}</Clue>
                      <Digit>{digits[r][c]}</Digit>
                    </Cell>
                  )))}
                </Grid>
              </Board>
              <Options>
                <AutoNotes><Ring /><Fit w={104}>AUTO-NOTES</Fit></AutoNotes>
                <Solid />
                <Solid />
                <Outline><FloppyIcon /><Fit w={41}>SAVE</Fit></Outline>
                <Outline $faint><PaperIcon /><Fit w={44}>PRINT</Fit></Outline>
              </Options>
            </Game>
          </Panel>
        </Page>
        <ScrollTrack>
          <svg width="9" height="5" viewBox="0 0 9 5"><path d="M0 5L4.500 0 9 5z" fill="#a3a3a3" /></svg>
          <ScrollThumb />
          <svg width="9" height="5" viewBox="0 0 9 5"><path d="M0 0l4.500 5L9 0z" fill="#505050" /></svg>
        </ScrollTrack>
      </View>

      <Taskbar>
        <Weather>
          <WeatherIcon />
          <div><div><Fit w={30}>69°F</Fit></div><Muted><Fit w={82}>Partly sunny</Fit></Muted></div>
        </Weather>
        <Pins>
          <Pin><WindowsIcon /></Pin>
          <Pin><SearchIcon /></Pin>
          <Pin><TaskViewIcon /></Pin>
          <Pin><ChatIcon /></Pin>
          <Pin $running><ExplorerIcon /></Pin>
          <Pin><EdgeIcon /></Pin>
          <Pin><StoreIcon /></Pin>
          <Pin><XboxTile><FaXbox size={26} /></XboxTile></Pin>
          <Pin><LIcon /></Pin>
          <Pin><SublimeIcon /></Pin>
          <Pin><TerminalIcon /></Pin>
          <Pin $active><ChromeIcon /></Pin>
        </Pins>
        <Tray>
          <TrayIcons />
          <DateTime><div><Fit w={51}>4:31 PM</Fit></div><div><Fit w={67}>5/14/2022</Fit></div></DateTime>
          <Badge>2</Badge>
        </Tray>
      </Taskbar>
    </Screen>
  );
}
